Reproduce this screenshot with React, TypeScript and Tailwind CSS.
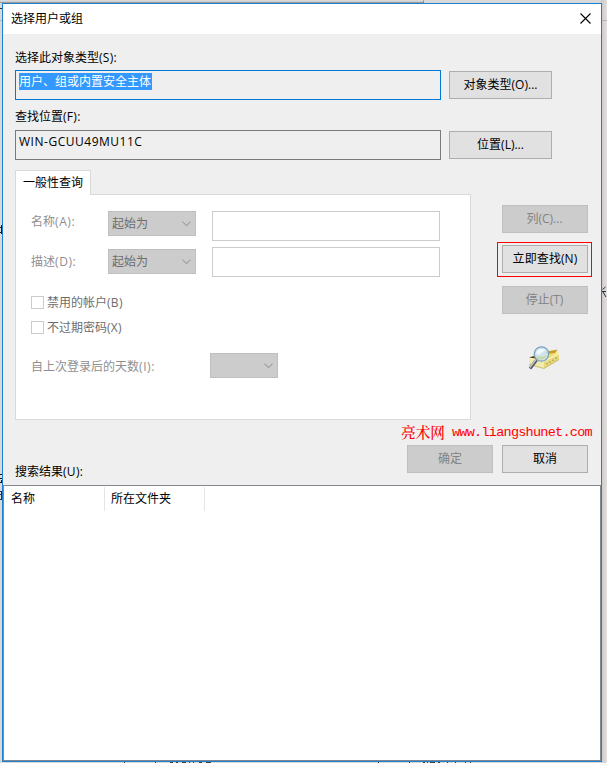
import React from 'react';
import clsx from 'clsx';

type ButtonProps = {
  children: React.ReactNode;
  disabled?: boolean;
  className?: string;
};

function DialogButton({ children, disabled, className }: ButtonProps) {
  return (
    <button
      type="button"
      disabled={disabled}
      className={clsx(
        'h-7 shrink-0 border text-center leading-[26px] whitespace-nowrap',
        disabled ? 'border-[#bfbfbf] bg-[#cccccc] text-[#838383]' : 'border-[#adadad] bg-[#e1e1e1] text-black',
        className
      )}
    >
      {children}
    </button>
  );
}

// Caption with an access key, e.g. "名称(A):"
function Caption({ text, hotkey }: { text: string; hotkey: string }) {
  return (
    <>
      {text}
      <span className="tracking-[0.3px]">({hotkey}):</span>
    </>
  );
}

function DisabledSelect({ label, className }: { label?: string; className?: string }) {
  return (
    <div
      className={clsx(
        'flex h-[25px] shrink-0 items-center justify-between border border-[#bfbfbf] bg-[#cccccc] pr-1 pl-[3px] text-[#6d6d6d]',
        className
      )}
    >
      <span className="leading-[23px]">{label}</span>
      <svg width="9" height="6" viewBox="0 0 9 6" fill="none" stroke="#a0a0a0" strokeWidth="1.1">
        <path d="M0.5 0.7 4.5 4.7 8.5 0.7" />
      </svg>
    </div>
  );
}

function CheckOption({ label, hotkey }: { label: string; hotkey: string }) {
  return (
    <label className="flex h-[13px] items-center text-[#6d6d6d]">
      <span className="mr-[3px] size-[13px] border border-[#cccccc] bg-white" />
      {label}
      <span className="tracking-[0.3px]">({hotkey})</span>
    </label>
  );
}

function SearchIcon() {
  return (
    <svg width="34" height="26" viewBox="0 0 34 26">
      <path d="M1 13 18 5 29 5 31 8 31 14 16 23.5 1 19Z" fill="#f1e9ae" />
      <path d="M1 13 18 6 30 8 16 16Z" fill="#efe070" />
      <path d="M17 7 29.5 4.5 27 8 18 9Z" fill="#c99b2e" />
      <path d="M16 16 31 8.5 31 14.5 16 23.5Z" fill="#e6d97f" />
      <path d="M1 13 16 16.5 31 8.5" fill="none" stroke="#fffbd6" />
      <path d="M1 19.5 16 23.5 31 14.5" fill="none" stroke="#c2b054" strokeWidth="0.8" />
      <path d="M19 18v1.5M22 16.5V18M25 14.5V16M28 12.5V14" stroke="#94843a" strokeWidth="1" />
      <path d="M1 12.5 6 11 8 13.5Z" fill="#4c401d" />
      <circle cx="13.5" cy="9" r="7.2" fill="#cbe6f6" fillOpacity="0.9" stroke="#7f9db5" strokeWidth="1.3" />
      <path d="M8 8.5C9 4.5 13 3 17.5 5L11 9.5Z" fill="#f4fbff" fillOpacity="0.9" />
      <path d="M8 12C11 11 15 12.5 19 10 17 15.5 11 16 8 12Z" fill="#c9d6a8" />
      <path d="M8.5 15 2 23.5" stroke="#4b5662" strokeWidth="3" />
      <path d="M8 14.5 1.8 22.5" stroke="#c5cdd3" strokeWidth="1.3" />
    </svg>
  );
}

// Parts of the window behind that stay visible around the dialog
function Backdrop() {
  return (
    <div className="absolute inset-0 overflow-hidden">
      <div className="absolute top-0 right-0 h-full w-[6px] bg-linear-to-r from-[#c9c7c7] to-[#e3dfde]" />
      <div className="absolute top-0 left-0 h-[3px] w-[424px] border-t border-r border-b border-t-[#d8d8d8] border-r-[#858585] border-b-[#9b9b9b] bg-[#cfcfcf]" />
      <svg className="absolute inset-0" width="607" height="763" viewBox="0 0 607 763" fill="none">
        <path d="M602 20.5h5" stroke="#b5b3b3" />
        <path d="M0 8.5h2" stroke="#333333" />
        <path d="M0 20.5h2" stroke="#b5b3b3" />
        <path d="M0 227.5h2M0 232.5h2M1.5 225v9" stroke="#1a1a3c" />
        <path d="M0 474.5h2M0 478.5h2M0 482.5h1M1.5 480v3" stroke="#1a1a2c" />
        <path d="M0 491.5h2M0 494.5h2M0 499.5h2M1.5 491v9" stroke="#17355c" />
        <path d="M602 291.5h4M605.5 287l-3 2.5M603 292l3 5" stroke="#2c2c40" />
        <path
          d="M124 762.5h1M155 762.5h1M170 762.5h3M176 762.5h2M182 762.5h4M189 762.5h1M193 762.5h1M199 762.5h3M206 762.5h5"
          stroke="#444444"
        />
        <path
          d="M378 762.5h1M409 762.5h1M423 762.5h2M427 762.5h1M430 762.5h5M438 762.5h2M447 762.5h1M455 762.5h1M465 762.5h1M470 762.5h1"
          stroke="#444444"
        />
      </svg>
    </div>
  );
}

export default function App() {
  return (
    <div className="relative h-[763px] w-[607px] overflow-hidden bg-[#d9d9d9] pt-[3px] pl-[2px] font-['Open_Sans','Noto_Sans_CJK_SC',sans-serif] text-[12px] leading-4 text-black">
      <Backdrop />

      <div className="relative flex h-[759px] w-[600px] flex-col border border-[#1c7fd0] bg-[#efefef]">
        <header className="flex h-[30px] shrink-0 items-center justify-between bg-white pr-[10px] pl-2">
          <h1>选择用户或组</h1>
          <button type="button" aria-label="关闭" className="-mt-px">
            <svg width="11" height="11" viewBox="0 0 11 11" fill="none" stroke="#000000" strokeWidth="1.1">
              <path d="M0.5 0.5 10.5 10.5M10.5 0.5 0.5 10.5" />
            </svg>
          </button>
        </header>

        <main className="flex h-[451px] shrink-0 flex-col pl-3">
          <div className="mt-4 h-5">
            <Caption text="选择此对象类型" hotkey="S" />
          </div>
          <div className="flex h-[30px] items-center">
            <div className="h-[30px] w-[426px] border border-[#0078d7] pt-[2px] pl-[3px]">
              <span className="block h-[17px] w-[133px] bg-[#3399ff] leading-[17px] text-white">用户、组或内置安全主体</span>
            </div>
            <DialogButton className="ml-2 w-[103px]">对象类型(O)...</DialogButton>
          </div>

          <div className="mt-[9px] h-[21px]">
            <Caption text="查找位置" hotkey="F" />
          </div>
          <div className="flex h-[30px] items-center">
            <div className="h-[30px] w-[426px] border border-[#7a7a7a] pt-[3px] pl-[3px] tracking-[0.52px]">
              WIN-GCUU49MU11C
            </div>
            <DialogButton className="ml-2 w-[103px]">位置(L)...</DialogButton>
          </div>

          <div className="mt-[10px] flex h-[250px]">
            <div className="w-[456px]">
              <div className="relative z-10 h-[25px] w-[76px] border border-b-0 border-[#d9d9d9] bg-white pl-[7px] leading-[23px]">
                一般性查询
              </div>
              <section className="-mt-px h-[226px] border border-[#d9d9d9] bg-white pt-4 pl-[15px]">
                <div className="flex h-[30px]">
                  <span className="w-[77px] leading-[22px] text-[#8f8f8f]">
                    名称<span className="tracking-[0.6px]">(A):</span>
                  </span>
                  <DisabledSelect label="起始为" className="w-[88px]" />
                  <input disabled className="ml-4 h-[30px] w-[228px] border border-[#cccccc] bg-white" />
                </div>
                <div className="mt-[6px] flex h-[30px]">
                  <span className="w-[77px] pt-1 leading-[22px] text-[#8f8f8f]">
                    描述<span className="tracking-[0.6px]">(D):</span>
                  </span>
                  <DisabledSelect label="起始为" className="mt-[2px] w-[88px]" />
                  <input disabled className="ml-4 h-[30px] w-[228px] border border-[#cccccc] bg-white" />
                </div>
                <div className="mt-[19px] flex flex-col gap-3">
                  <CheckOption label="禁用的帐户" hotkey="B" />
                  <CheckOption label="不过期密码" hotkey="X" />
                </div>
                <div className="mt-[19px] flex">
                  <span className="w-[179px] leading-[27px] text-[#8f8f8f]">
                    自上次登录后的天数<span className="tracking-[0.6px]">(I):</span>
                  </span>
                  <DisabledSelect className="w-[68px]" />
                </div>
              </section>
            </div>

            <aside className="ml-[26px] flex w-[95px] flex-col items-center pt-[35px]">
              <DialogButton disabled className="w-[86px]">列(C)...</DialogButton>
              <div className="mt-[9px] h-[35px] w-[95px] border border-[#ff0000] px-1 pt-[2px]">
                <DialogButton className="w-[86px] tracking-[0.1px]">立即查找(N)</DialogButton>
              </div>
              <DialogButton disabled className="mt-[9px] w-[86px]">停止(T)</DialogButton>
              <div className="mt-[31px]">
                <SearchIcon />
              </div>
            </aside>
          </div>

          <div className="mt-[2px] flex h-[19px] items-center pl-[386px] whitespace-nowrap text-[#ff0000]">
            <span className="font-['Noto_Serif_CJK_SC','Noto_Sans_CJK_SC',serif] text-[14.67px] font-medium">亮术网</span>
            <span className="ml-[7px] pt-[2px] font-['Liberation_Mono',monospace] text-[13.5px] tracking-[-0.74px]">
              www.liangshunet.com
            </span>
          </div>
          <div className="mt-1 flex h-7 gap-[9px] pl-[392px]">
            <DialogButton disabled className="w-[86px]">确定</DialogButton>
            <DialogButton className="w-[86px]">取消</DialogButton>
          </div>
          <div className="-mt-[9px]">
            <Caption text="搜索结果" hotkey="U" />
          </div>
        </main>

        <section className="flex-1 border border-[#828790] bg-white">
          <div className="mt-px flex h-6 leading-6">
            <div className="w-[101px] border-r border-[#e5e5e5] pl-[7px]">名称</div>
            <div className="w-[100px] border-r border-[#e5e5e5] pl-[6px]">所在文件夹</div>
          </div>
        </section>
      </div>
    </div>
  );
}
